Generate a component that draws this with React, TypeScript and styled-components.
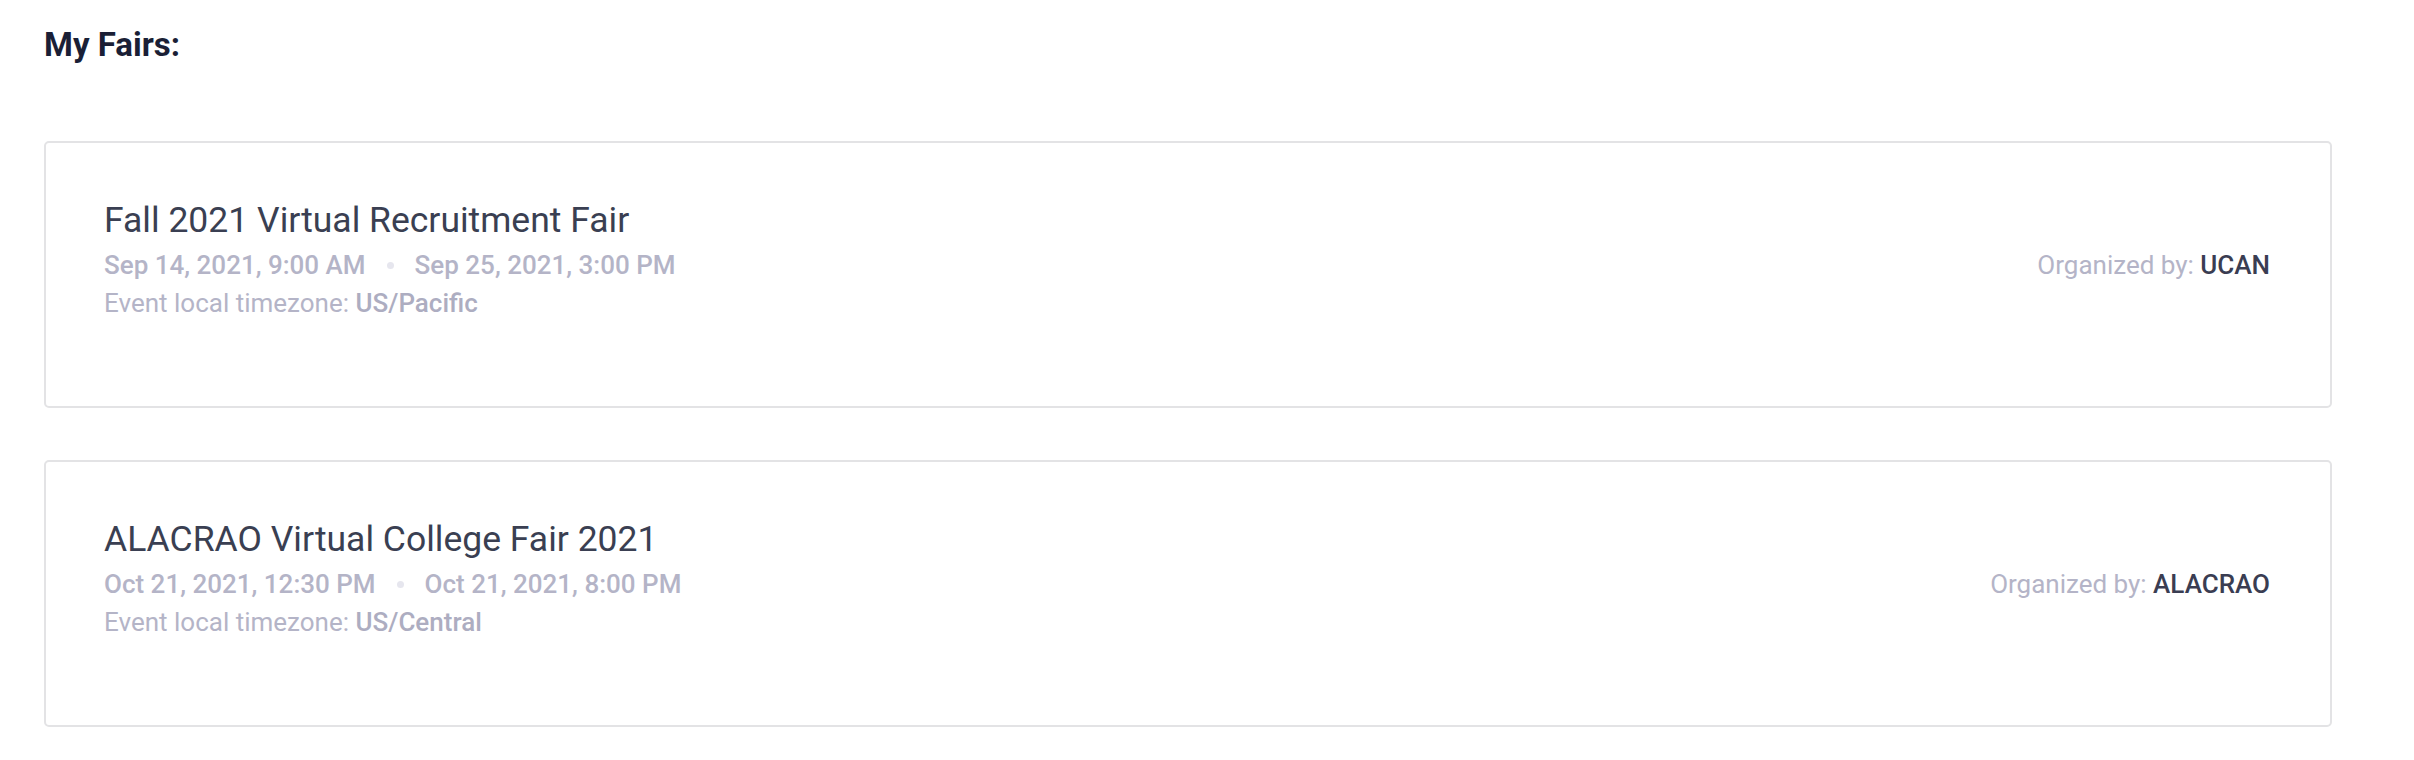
import React from 'react';
import styled, { createGlobalStyle } from 'styled-components';

const GlobalStyle = createGlobalStyle`
  html, body {
    margin: 0;
    padding: 0;
    background: #ffffff;
  }

  body {
    font-family: Roboto, "Liberation Sans", Arial, sans-serif;
  }
`;

const Page = styled.main`
  padding: 25px 82px 40px 44px;
`;

const Heading = styled.h2`
  margin: 0 0 76px;
  font-size: 33px;
  line-height: 40px;
  font-weight: 700;
  color: #1a1f36;
`;

const FairList = styled.div`
  display: flex;
  flex-direction: column;
  gap: 52px;
`;

const Card = styled.section`
  display: grid;
  grid-template-columns: 1fr auto;
  grid-template-areas:
    'title .'
    'dates org'
    'zone .';
  align-items: baseline;
  padding: 57px 60px 84px 58px;
  border: 2px solid #e3e3e5;
  border-radius: 5px;
  background: #fff;
`;

const Title = styled.h3`
  grid-area: title;
  margin: 0 0 6px;
  font-size: 35.5px;
  line-height: 40px;
  font-weight: 400;
  color: #3a3f52;
`;

const DateRow = styled.div`
  grid-area: dates;
  display: flex;
  align-items: center;
  font-size: 26px;
  line-height: 38px;
  font-weight: 500;
  color: #b4b4c7;
`;

const Dot = styled.span`
  width: 7px;
  height: 7px;
  margin: 0 21px;
  border-radius: 50%;
  background: #e6e6ee;
`;

const Zone = styled.div`
  grid-area: zone;
  font-size: 26px;
  line-height: 38px;
  font-weight: 400;
  color: #b4b4c7;

  strong {
    font-weight: 500;
    color: #adadc1;
  }
`;

const Organizer = styled.div`
  grid-area: org;
  justify-self: end;
  font-size: 26px;
  line-height: 38px;
  color: #b4b4c7;

  strong {
    font-weight: 500;
    color: #3a3d52;
  }
`;

type Fair = {
  name: string;
  start: string;
  end: string;
  timezone: string;
  organizer: string;
};

const fairs: Fair[] = [
  {
    name: 'Fall 2021 Virtual Recruitment Fair',
    start: 'Sep 14, 2021, 9:00 AM',
    end: 'Sep 25, 2021, 3:00 PM',
    timezone: 'US/Pacific',
    organizer: 'UCAN',
  },
  {
    name: 'ALACRAO Virtual College Fair 2021',
    start: 'Oct 21, 2021, 12:30 PM',
    end: 'Oct 21, 2021, 8:00 PM',
    timezone: 'US/Central',
    organizer: 'ALACRAO',
  },
];

function FairCard({ fair }: { fair: Fair }) {
  return (
    <Card>
      <Title>{fair.name}</Title>
      <DateRow>
        <span>{fair.start}</span>
        <Dot />
        <span>{fair.end}</span>
      </DateRow>
      <Organizer>
        Organized by: <strong>{fair.organizer}</strong>
      </Organizer>
      <Zone>
        Event local timezone: <strong>{fair.timezone}</strong>
      </Zone>
    </Card>
  );
}

export default function App() {
  return (
    <>
      <GlobalStyle />
      <Page>
        <Heading>My Fairs:</Heading>
        <FairList>
          {fairs.map((fair) => (
            <FairCard key={fair.name} fair={fair} />
          ))}
        </FairList>
      </Page>
    </>
  );
}
